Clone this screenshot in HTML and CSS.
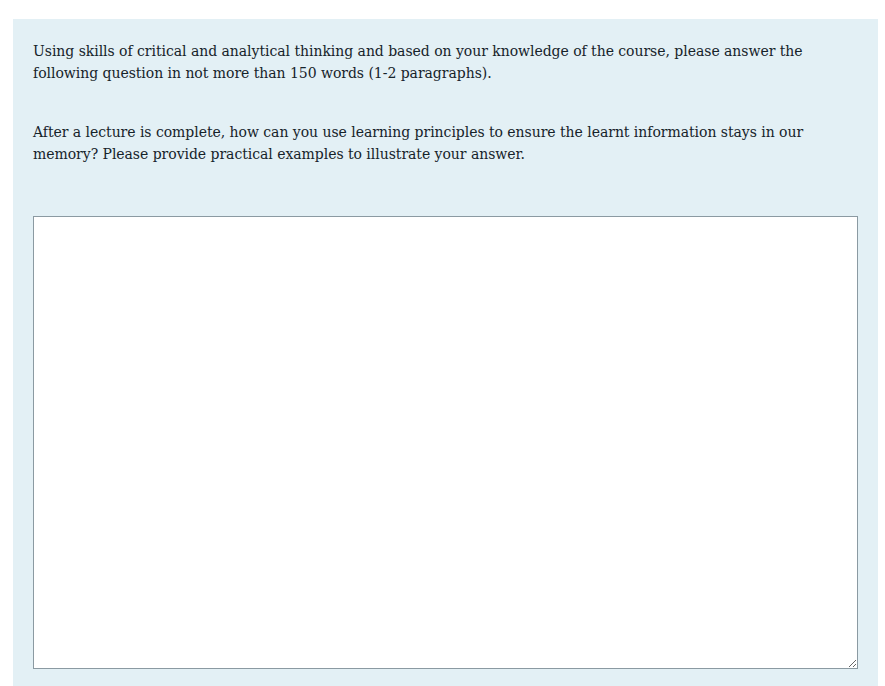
FILE: index.html
```html
<!DOCTYPE html>
<html>
<head>
<meta charset="utf-8">
<link rel="stylesheet" href="styles.css">
</head>
<body>
<div class="panel">
  <p class="lead">Using skills of critical and analytical thinking and based on your knowledge of the course, please answer the following question in not more than 150 words (1-2 paragraphs).</p>
  <p class="question">After a lecture is complete, how can you use learning principles to ensure the learnt information stays in our memory? Please provide practical examples to illustrate your answer.</p>
  <textarea class="answer"></textarea>
</div>
</body>
</html>
```

FILE: styles.css
```css
html, body {
  margin: 0;
  padding: 0;
  background: #ffffff;
}
body {
  padding: 19px 7px 0 13px;
  font-family: "DejaVu Serif", serif;
  color: #16232a;
}
.panel {
  background: #e3f0f5;
  padding: 21px 20px 20px 20px;
  min-height: 660px;
  box-sizing: border-box;
}
.lead, .question {
  margin: 0;
  font-size: 14px;
  line-height: 22px;
  letter-spacing: -0.04px;
}
.question {
  margin-top: 37px;
}
.answer {
  display: block;
  margin-top: 51px;
  width: 825px;
  height: 453px;
  box-sizing: border-box;
  border: 1px solid #8b9aa2;
  background: #ffffff;
  border-radius: 0;
  padding: 4px;
  resize: vertical;
}
```
